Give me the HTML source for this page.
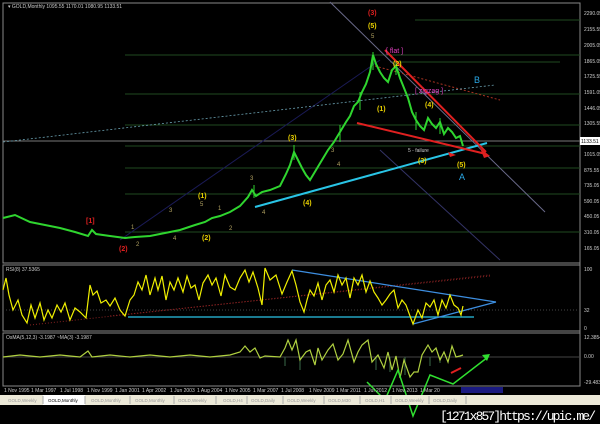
<!DOCTYPE html>
<html><head><meta charset="utf-8"><style>
html,body{margin:0;padding:0;background:#000;}
body{width:600px;height:424px;overflow:hidden;position:relative;font-family:"Liberation Sans",sans-serif;}
svg{position:absolute;left:0;top:0;}
.s{font-size:5px;fill:#ccc;}
</style></head><body>
<svg width="600" height="424" viewBox="0 0 600 424">
<rect width="600" height="424" fill="#000"/>
<rect x="3" y="3" width="577" height="260" fill="none" stroke="#888" stroke-width="1"/>
<rect x="3" y="265" width="577" height="66" fill="none" stroke="#888" stroke-width="1"/>
<rect x="3" y="333" width="577" height="53" fill="none" stroke="#888" stroke-width="1"/>
<line x1="580" y1="3" x2="580" y2="386" stroke="#888"/>
<text x="8" y="8" class="s">▾ GOLD,Monthly 1095.55 1170.01 1080.95 1133.51</text>
<g stroke="#1f4a1f" stroke-width="1">
<line x1="125" y1="55" x2="580" y2="55"/>
<line x1="125" y1="94" x2="580" y2="94"/>
<line x1="125" y1="125" x2="580" y2="125"/>
<line x1="125" y1="146" x2="580" y2="146"/>
<line x1="125" y1="168" x2="580" y2="168"/>
<line x1="125" y1="194" x2="580" y2="194"/>
<line x1="125" y1="232" x2="580" y2="232"/>
<line x1="415" y1="20" x2="580" y2="20"/>
<line x1="390" y1="62" x2="560" y2="62"/>
</g>
<line x1="3" y1="141" x2="580" y2="141" stroke="#777"/>
<line x1="330" y1="2" x2="545" y2="212" stroke="#6a6a8a" stroke-width="1"/>
<line x1="120" y1="240" x2="380" y2="60" stroke="#1a1a55" stroke-width="1"/>
<line x1="380" y1="150" x2="500" y2="260" stroke="#333366"/>
<line x1="375" y1="66" x2="500" y2="100" stroke="#aa3322" stroke-dasharray="2,2"/>
<line x1="3" y1="142" x2="495" y2="85" stroke="#6aa0b0" stroke-dasharray="2,2" stroke-width="0.8"/>
<polyline fill="none" stroke="#2fd52f" stroke-width="2" points="3,218 15,215 30,222 45,225 60,228 75,232 88,236 92,230 96,234 110,236 125,238 135,237 150,236 160,234 170,232 180,230 195,225 205,222 212,218 220,216 230,212 240,206 248,197 252,190 256,196 262,192 270,190 280,186 286,174 290,165 294,152 298,160 302,168 306,175 310,180 316,170 322,160 328,150 334,142 340,132 346,122 350,116 354,106 358,102 362,92 366,84 370,72 373,55 376,64 380,72 384,78 388,82 392,70 396,66 400,78 404,88 408,98 412,112 416,120 420,126 424,130 428,118 432,124 436,128 440,122 444,134 448,128 452,132 456,138 460,136 463,146"/>
<g stroke="#2fd52f" stroke-width="1">
<line x1="254" y1="185" x2="254" y2="198"/><line x1="294" y1="145" x2="294" y2="160"/><line x1="373" y1="52" x2="373" y2="70"/><line x1="396" y1="60" x2="396" y2="75"/><line x1="416" y1="112" x2="416" y2="130"/><line x1="340" y1="125" x2="340" y2="142"/><line x1="360" y1="92" x2="360" y2="110"/><line x1="440" y1="118" x2="440" y2="134"/>
</g>
<line x1="255" y1="207" x2="487" y2="143" stroke="#29c4e6" stroke-width="2"/>
<line x1="385" y1="50" x2="486" y2="152" stroke="#e02020" stroke-width="2"/>
<line x1="357" y1="123" x2="486" y2="154" stroke="#e02020" stroke-width="2"/>
<polygon points="490,156 480,148 484,158" fill="#e02020"/>
<polygon points="456,155 448,152 450,157" fill="#e02020"/>
<rect x="580" y="137" width="20" height="8" fill="#fff"/>
<text x="581" y="143" font-size="5" fill="#000">1133.51</text>
<g class="s" font-size="4.5" fill="#bbb">
<text x="584" y="15">2290.05</text><text x="584" y="31">2155.55</text><text x="584" y="47">2005.05</text><text x="584" y="63">1865.05</text><text x="584" y="78">1725.55</text><text x="584" y="94">1591.05</text><text x="584" y="110">1446.05</text><text x="584" y="125">1305.55</text><text x="584" y="156">1015.05</text><text x="584" y="172">875.55</text><text x="584" y="187">735.05</text><text x="584" y="203">590.05</text><text x="584" y="218">450.05</text><text x="584" y="234">310.05</text><text x="584" y="250">165.05</text>
</g>
<g font-size="7" font-weight="bold">
<text x="368" y="15" fill="#e02020">(3)</text>
<text x="368" y="28" fill="#e8d000">(5)</text>
<text x="386" y="53" fill="#e040c0" font-weight="normal">[ flat ]</text>
<text x="393" y="66" fill="#e8d000">(2)</text>
<text x="415" y="93" fill="#e040c0" font-weight="normal">[ zigzag ]</text>
<text x="425" y="107" fill="#e8d000">(4)</text>
<text x="377" y="111" fill="#e8d000">(1)</text>
<text x="418" y="163" fill="#e8d000">(3)</text>
<text x="457" y="167" fill="#e8d000">(5)</text>
<text x="459" y="180" fill="#29a8e6" font-size="9" font-weight="normal">A</text>
<text x="474" y="83" fill="#29a8e6" font-size="9" font-weight="normal">B</text>
<text x="86" y="223" fill="#e02020">[1]</text>
<text x="119" y="251" fill="#e02020">(2)</text>
<text x="198" y="198" fill="#e8d000">(1)</text>
<text x="202" y="240" fill="#e8d000">(2)</text>
<text x="288" y="140" fill="#e8d000">(3)</text>
<text x="303" y="205" fill="#e8d000">(4)</text>
</g>
<g font-size="6" fill="#b0a060">
<text x="371" y="38">5</text><text x="250" y="180">3</text><text x="262" y="214">4</text><text x="200" y="206">5</text><text x="218" y="210">1</text><text x="229" y="230">2</text><text x="169" y="212">3</text><text x="173" y="240">4</text><text x="131" y="229">1</text><text x="136" y="246">2</text><text x="331" y="152">3</text><text x="337" y="166">4</text>
<text x="408" y="152" fill="#ccc" font-size="5">5 - failure</text>
</g>
<text x="6" y="271" class="s">RSI(8) 37.5365</text>
<line x1="3" y1="310" x2="580" y2="310" stroke="#444" stroke-dasharray="1,2"/>
<line x1="30" y1="325" x2="490" y2="275" stroke="#882222" stroke-dasharray="1,2"/>
<line x1="110" y1="316" x2="490" y2="276" stroke="#882222" stroke-dasharray="1,2"/>
<line x1="128" y1="317" x2="474" y2="317" stroke="#29c4e6" stroke-width="1.2"/>
<line x1="292" y1="270" x2="496" y2="302" stroke="#3d8ee0" stroke-width="1.2"/>
<line x1="413" y1="324" x2="496" y2="302" stroke="#3d8ee0" stroke-width="1.2"/>
<polyline fill="none" stroke="#f0f000" stroke-width="1.2" points="3,290 6,278 9,295 13,310 18,300 22,315 27,323 31,305 35,318 40,303 44,320 48,310 52,318 57,305 61,312 65,303 70,320 75,308 80,312 86,318 90,285 93,295 97,291 101,303 106,300 110,306 115,298 120,310 125,316 130,300 134,295 138,282 142,290 146,275 150,295 155,278 158,290 162,276 166,300 170,282 174,290 178,278 183,292 187,276 191,288 195,285 199,300 203,283 208,275 212,285 216,278 221,296 225,275 230,287 235,290 240,278 245,270 249,282 253,272 258,288 262,305 265,268 270,280 276,275 282,294 287,282 292,271 296,285 300,302 304,312 307,300 310,290 314,296 318,283 322,300 326,285 330,280 334,292 338,275 342,285 346,278 350,298 354,278 358,285 362,275 366,292 370,281 374,292 378,298 382,305 386,300 390,294 394,290 398,308 402,300 406,305 410,316 413,324 418,310 422,318 426,303 430,307 434,300 438,315 442,300 446,308 450,295 454,305 458,308 461,315 463,306"/>
<g class="s" font-size="4.5"><text x="584" y="271">100</text><text x="584" y="312">32</text><text x="584" y="330">0</text></g>
<text x="6" y="339" class="s">OsMA(5,12,3) -3.1987 ~MA(3) -3.1987</text>
<line x1="3" y1="357" x2="580" y2="357" stroke="#444"/>
<g stroke="#3a6a4a" stroke-width="1">
<line x1="285" y1="357" x2="285" y2="366"/><line x1="300" y1="357" x2="300" y2="370"/><line x1="376" y1="357" x2="376" y2="370"/><line x1="390" y1="357" x2="390" y2="372"/><line x1="405" y1="357" x2="405" y2="375"/><line x1="430" y1="357" x2="430" y2="366"/><line x1="440" y1="357" x2="440" y2="363"/>
</g>
<polyline fill="none" stroke="#b0d040" stroke-width="1.2" points="3,357 20,355 40,357 60,355 80,357 88,351 92,357 110,355 130,357 150,355 170,357 190,355 210,357 230,355 240,352 245,346 250,352 255,348 260,358 265,356 280,357 285,348 288,340 292,350 296,340 300,360 306,352 310,350 315,365 318,348 322,360 328,350 333,344 338,360 343,354 348,340 354,362 358,352 362,345 368,340 372,362 378,355 384,368 388,352 392,370 396,356 400,378 404,360 410,377 414,372 418,372 422,355 428,345 432,352 436,348 440,360 444,352 448,362 452,346 456,357 460,356 463,355"/>
<polyline points="367,382 385,400 398,370 413,416 430,375 453,384 488,357" stroke="#30e030" stroke-width="1.5" fill="none"/>
<polygon points="490,354 482,355 487,361" fill="#30e030"/>
<line x1="451" y1="373" x2="461" y2="368" stroke="#e02020" stroke-width="2"/>
<g class="s" font-size="4.5"><text x="584" y="339">12.3854</text><text x="584" y="358">0.00</text><text x="584" y="384">-29.4835</text></g>
<rect x="461" y="387" width="42" height="6" fill="#1a1a80"/>
<g class="s" font-size="4.5" fill="#ccc">
<text x="4" y="392">1 Nov 1995</text><text x="31" y="392">1 Mar 1997</text><text x="60" y="392">1 Jul 1998</text><text x="87" y="392">1 Nov 1999</text><text x="115" y="392">1 Jan 2001</text><text x="142" y="392">1 Apr 2002</text><text x="170" y="392">1 Jun 2003</text><text x="197" y="392">1 Aug 2004</text><text x="225" y="392">1 Nov 2005</text><text x="253" y="392">1 Mar 2007</text><text x="281" y="392">1 Jul 2008</text><text x="309" y="392">1 Nov 2009</text><text x="336" y="392">1 Mar 2011</text><text x="364" y="392">1 Jul 2012</text><text x="392" y="392">1 Nov 2013</text><text x="420" y="392">1 Mar 20</text>
</g>
<rect x="0" y="395" width="600" height="10" fill="#ece9d8"/>
<rect x="43" y="395" width="42" height="10" fill="#fff"/>
<g stroke="#aaa"><line x1="43" y1="396" x2="43" y2="404"/><line x1="85" y1="396" x2="85" y2="404"/><line x1="130" y1="396" x2="130" y2="404"/><line x1="174" y1="396" x2="174" y2="404"/><line x1="216" y1="396" x2="216" y2="404"/><line x1="247" y1="396" x2="247" y2="404"/><line x1="283" y1="396" x2="283" y2="404"/><line x1="324" y1="396" x2="324" y2="404"/><line x1="360" y1="396" x2="360" y2="404"/><line x1="391" y1="396" x2="391" y2="404"/><line x1="429" y1="396" x2="429" y2="404"/><line x1="466" y1="396" x2="466" y2="404"/></g>
<g font-size="4.5" fill="#999">
<text x="8" y="402">GOLD,Weekly</text><text x="48" y="402" fill="#000">GOLD,Monthly</text><text x="91" y="402">GOLD,Monthly</text><text x="135" y="402">GOLD,Monthly</text><text x="178" y="402">GOLD,Weekly</text><text x="223" y="402">GOLD,H4</text><text x="251" y="402">GOLD,Daily</text><text x="287" y="402">GOLD,Weekly</text><text x="328" y="402">GOLD,M30</text><text x="365" y="402">GOLD,H1</text><text x="395" y="402">GOLD,Weekly</text><text x="433" y="402">GOLD,Daily</text>
</g>
<text x="440" y="420" font-size="13" fill="#fff" font-family="Liberation Mono, monospace" textLength="156">[1271x857]https://upic.me/</text>
</svg>
</body></html>
